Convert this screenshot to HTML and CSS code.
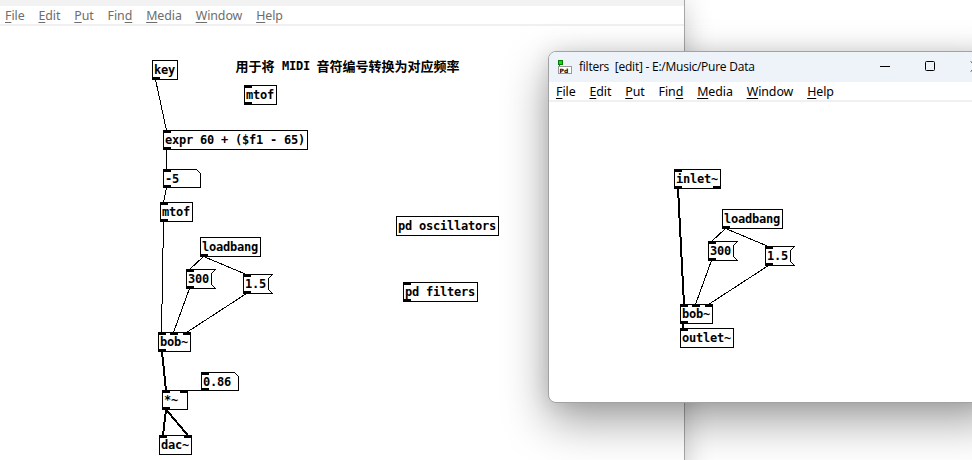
FILE: index.html
```html
<!DOCTYPE html>
<html lang="en">
<head>
<meta charset="utf-8">
<title>Pure Data</title>
<link rel="stylesheet" href="styles.css">
</head>
<body>
<main class="desktop">
  <section class="window window-main">
    <div class="title-strip"></div>
    <nav class="menu menu-inactive">
      <span><u>F</u>ile</span><span><u>E</u>dit</span><span><u>P</u>ut</span><span>Fin<u>d</u></span><span><u>M</u>edia</span><span><u>W</u>indow</span><span><u>H</u>elp</span>
    </nav>
    <svg class="patch" id="main-patch" viewBox="0 26 684 434" width="684" height="434"></svg>
  </section>
  <section class="window window-sub">
    <header class="titlebar">
      <svg class="app-icon" width="15" height="15" viewBox="0 0 15 15" shape-rendering="crispEdges">
        <rect x=".5" y=".5" width="4" height="4" fill="#00e800" stroke="#087a08"/>
        <path d="M1 5v2" stroke="#555"/>
        <rect x=".5" y="6.5" width="13" height="7" fill="#fff" stroke="#999"/>
        <text x="1.5" y="12.5" class="icon-text">Pd</text>
      </svg>
      <span class="title">filters&nbsp; [edit] - E:/Music/Pure Data</span>
      <svg class="controls" width="97" height="30" viewBox="0 0 97 30" fill="none" stroke="#000">
        <path d="M5 14.5h10"/>
        <rect x="50.5" y="9.5" width="9" height="9" rx="1"/>
        <path d="M96 9.5l10 10M96 19.5l10-10"/>
      </svg>
    </header>
    <nav class="menu">
      <span><u>F</u>ile</span><span><u>E</u>dit</span><span><u>P</u>ut</span><span>Fin<u>d</u></span><span><u>M</u>edia</span><span><u>W</u>indow</span><span><u>H</u>elp</span>
    </nav>
    <svg class="patch" id="sub-patch" viewBox="549 102 423 300" width="423" height="300"></svg>
  </section>
</main>
<script src="patch.js"></script>
</body>
</html>
```
FILE: styles.css
```css
body {
  margin: 0;
  background: #fff;
}

.desktop {
  position: relative;
  width: 972px;
  height: 460px;
  overflow: hidden;
  background: #fff;
}

.window {
  display: flex;
  flex-direction: column;
  background: #fff;
}

.window-main {
  width: 684px;
  height: 480px;
  border-right: 1px solid #a6a6a6;
  box-shadow: 0 4px 26px rgba(0, 0, 0, 0.22);
}

.window-sub {
  position: absolute;
  left: 548px;
  top: 51px;
  width: 450px;
  height: 350px;
  border: 1px solid #a0a2a4;
  border-radius: 8px;
  overflow: hidden;
  box-shadow: 0 18px 46px rgba(0, 0, 0, 0.38), 0 0 20px rgba(0, 0, 0, 0.1);
}

.title-strip {
  flex: none;
  height: 6px;
  background: #f2f2f2;
}

.menu {
  flex: none;
  display: flex;
  gap: 13.9px;
  box-sizing: border-box;
  height: 20px;
  padding-left: 5px;
  border-bottom: 2px solid #f0f0f0;
  font: 12.4px/19px "Noto Sans", sans-serif;
  letter-spacing: -0.07px;
  color: #000;
}

.window-sub .menu {
  padding-left: 7px;
}

.menu-inactive {
  color: #6d6d6d;
}

.menu u {
  text-underline-offset: 2px;
  text-decoration-thickness: 1px;
  text-decoration-skip-ink: none;
}

.titlebar {
  flex: none;
  display: flex;
  align-items: center;
  width: 423px;
  height: 30px;
  background: #eef3fa;
}

.app-icon {
  flex: none;
  margin-left: 9px;
}

.icon-text {
  font: bold 6px "DejaVu Sans", sans-serif;
}

.title {
  flex: 1;
  margin-left: 6px;
  font: 12px/30px "Open Sans", sans-serif;
  letter-spacing: -0.24px;
  white-space: nowrap;
}

.controls {
  flex: none;
}

.patch {
  flex: none;
  display: block;
}

.shape {
  fill: #fff;
  stroke: #000;
}

.port {
  fill: #000;
}

.cord {
  stroke: #000;
  stroke-width: 1;
}

.signal {
  stroke-width: 2;
}

.label {
  font: bold 12px "DejaVu Sans Mono", monospace;
  letter-spacing: -0.224px;
  white-space: pre;
}

.comment-cjk {
  font: bold 13px "Noto Sans CJK SC", sans-serif;
}
```
FILE: patch.js
```js
const NS = "http://www.w3.org/2000/svg";

function add(svg, tag, attrs, text) {
  const el = document.createElementNS(NS, tag);
  for (const key in attrs) el.setAttribute(key, attrs[key]);
  if (text) el.textContent = text;
  svg.appendChild(el);
}

// Object: [kind, x, y, width, label, inlet offsets, outlet offsets]
function drawObject(svg, [kind, x, y, w, label, inlets, outlets]) {
  const h = kind === "num" ? 18 : 19;
  const outline = {
    obj: `h${w}v${h}h${-w}z`,
    num: `h${w - 4}l4 4v${h - 4}h${-w}z`,
    msg: `h${w + 4}l-4 4v${h - 8}l4 4h${-w - 4}z`
  }[kind];
  add(svg, "path", { class: "shape", "shape-rendering": "crispEdges", d: `M${x + .5} ${y + .5}${outline}` });
  for (const p of inlets) add(svg, "rect", { class: "port", x: x + p, y, width: 8, height: 3 });
  for (const p of outlets) add(svg, "rect", { class: "port", x: x + p, y: y + h - 2, width: 8, height: 3 });
  add(svg, "text", { class: "label", x: x + 2, y: y + 14 }, label);
}

// Cord: [x1, y1, x2, y2, carries signal]
function drawCord(svg, [x1, y1, x2, y2, signal]) {
  const shift = signal ? 0 : .5;
  add(svg, "line", {
    class: signal ? "cord signal" : "cord", "shape-rendering": "crispEdges",
    x1: x1 + shift, y1: y1 + .5, x2: x2 + shift, y2: y2 + .5
  });
}

const main = document.getElementById("main-patch");
[
  ["obj", 152, 60, 25, "key", [], [0]],
  ["obj", 244, 85, 32, "mtof", [0], [0]],
  ["obj", 163, 130, 144, "expr 60 + ($f1 - 65)", [0], [0]],
  ["num", 163, 169, 37, "-5", [0], [0]],
  ["obj", 160, 202, 32, "mtof", [0], [0]],
  ["obj", 200, 237, 60, "loadbang", [], [0]],
  ["msg", 186, 269, 25, "300", [0], [0]],
  ["msg", 243, 274, 25, "1.5", [0], [0]],
  ["obj", 158, 332, 32, "bob~", [0, 12, 25], [0]],
  ["num", 201, 372, 37, "0.86", [0], [0]],
  ["obj", 162, 390, 25, "*~", [0, 18], [0]],
  ["obj", 159, 435, 32, "dac~", [0, 25], []],
  ["obj", 396, 216, 102, "pd oscillators", [], []],
  ["obj", 403, 282, 74, "pd filters", [0], [0]]
].forEach(o => drawObject(main, o));
[
  [155, 79, 166, 130], [166, 149, 166, 169], [166, 187, 163, 202],
  [163, 221, 161, 332], [203, 256, 189, 269], [203, 256, 246, 274],
  [189, 288, 173, 332], [246, 293, 186, 332], [162, 351, 166, 390, true],
  [204, 390, 183, 390], [166, 409, 163, 435, true], [166, 409, 188, 435, true]
].forEach(c => drawCord(main, c));
add(main, "text", { class: "comment-cjk", x: 235.5, y: 71 }, "用于将");
add(main, "text", { class: "label", x: 282, y: 70 }, "MIDI");
add(main, "text", { class: "comment-cjk", x: 316.5, y: 71 }, "音符编号转换为对应频率");

const sub = document.getElementById("sub-patch");
[
  ["obj", 674, 169, 46, "inlet~", [0], [0, 39]],
  ["obj", 722, 209, 60, "loadbang", [], [0]],
  ["msg", 708, 241, 25, "300", [0], [0]],
  ["msg", 765, 246, 25, "1.5", [0], [0]],
  ["obj", 680, 304, 32, "bob~", [0, 12, 25], [0]],
  ["obj", 680, 328, 53, "outlet~", [0], []]
].forEach(o => drawObject(sub, o));
[
  [678, 188, 684, 304, true], [725, 228, 711, 241], [725, 228, 768, 246],
  [711, 260, 695, 304], [768, 265, 708, 304], [683, 323, 683, 328, true]
].forEach(c => drawCord(sub, c));
```
